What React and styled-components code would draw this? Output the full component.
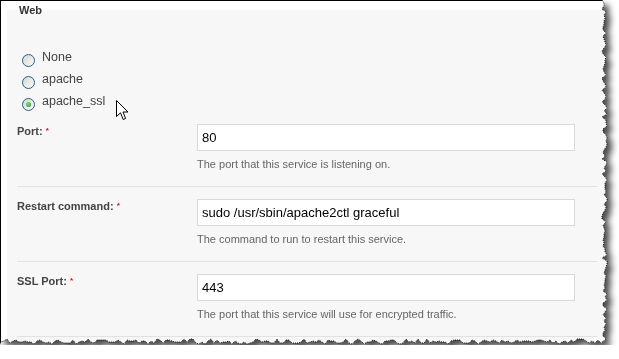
import React from "react";
import styled, { createGlobalStyle } from "styled-components";

const W = 608;
const H = 345;

// torn paper edge, same points every run
const seed = (() => {
	let s = 11;
	return () => {
		s = (s * 16807) % 2147483647;
		return s / 2147483647;
	};
})();

const edge = [];
for (let y = 0; y <= H - 5; y += 3) edge.push([W - 6 + Math.round(seed() * 5), y]);
for (let x = W - 7; x >= 0; x -= 3) edge.push([x, H - 6 + Math.round(seed() * 5)]);

const clip = `polygon(0 0, ${edge.map(([x, y]) => `${x}px ${y}px`).join(", ")}, 0 ${H}px)`;
const outline = edge.map(([x, y]) => `${x},${y}`).join(" ");

const fields = [
	{ label: "Port:", value: "80", help: "The port that this service is listening on." },
	{
		label: "Restart command:",
		value: "sudo /usr/sbin/apache2ctl graceful",
		help: "The command to run to restart this service.",
	},
	{ label: "SSL Port:", value: "443", help: "The port that this service will use for encrypted traffic." },
];

const servers = ["None", "apache", "apache_ssl"];

const App = () => {
	return (
		<>
			<GlobalStyle />
			<Shot>
				<Frame style={{ clipPath: clip }}>
					<Panel>
						<Legend>Web</Legend>
						<Radios>
							{servers.map((s) => (
								<RadioRow key={s}>
									<Radio type="radio" name="server" defaultChecked={s === "apache_ssl"} />
									{s}
								</RadioRow>
							))}
						</Radios>
						{fields.map((f) => (
							<Row key={f.label}>
								<Label>
									{f.label} <Req>*</Req>
								</Label>
								<Field>
									<Input defaultValue={f.value} />
									<Help>{f.help}</Help>
								</Field>
							</Row>
						))}
					</Panel>
				</Frame>
				<Edge width={W} height={H}>
					<polyline points={outline} fill="none" stroke="#111" strokeWidth="1" strokeDasharray="1 1" />
				</Edge>
				<Cursor width="13" height="21" viewBox="0 0 13 21">
					<path d="M0.5 0.5 L0.5 16.5 L4.5 12.8 L7.2 19.5 L9.6 18.5 L7 12 L12 12 Z" fill="#fff" stroke="#000" strokeWidth="1" />
				</Cursor>
			</Shot>
		</>
	);
};

const GlobalStyle = createGlobalStyle`
	body {
		margin: 0;
		background: #fff;
		font-family: "Liberation Sans", Arial, sans-serif;
	}
`;

const Shot = styled.div`
	position: relative;
	width: ${W}px;
	height: ${H}px;
	filter: drop-shadow(5px 5px 3px rgba(0, 0, 0, 0.7));
`;

const Frame = styled.div`
	box-sizing: border-box;
	width: ${W}px;
	height: ${H}px;
	background: #fff;
	border-top: 1px solid #000;
	border-left: 1px solid #000;
	padding: 9px 0 0 6px;
	overflow: hidden;
`;

const Panel = styled.div`
	display: flow-root;
	height: 100%;
	background: #f7f7f7;
	padding: 0 11px 0 10px;
`;

const Legend = styled.div`
	margin: -6px 0 0 2px;
	font-size: 11px;
	line-height: 13px;
	font-weight: bold;
	color: #333;
`;

const Radios = styled.div`
	margin: 29px 0 0 5px;
`;

const RadioRow = styled.label`
	display: flex;
	align-items: center;
	height: 22px;
	font-size: 12.5px;
	color: #444;
`;

const Radio = styled.input`
	appearance: none;
	box-sizing: border-box;
	width: 13px;
	height: 13px;
	margin: 7px 7px 0 0;
	border: 1px solid #2e5d8c;
	border-radius: 50%;
	background: linear-gradient(135deg, #d4d4cf, #fcfcfb);
	display: grid;
	place-items: center;
	&:checked::after {
		content: "";
		width: 5px;
		height: 5px;
		border-radius: 50%;
		background: radial-gradient(circle at 35% 35%, #7de07d, #1f9a1f);
	}
`;

const Row = styled.div`
	display: flex;
	padding: 12px 0 15px;
	border-bottom: 1px solid #e2e2e2;
	&:first-of-type {
		padding-top: 11px;
	}
`;

const Label = styled.div`
	width: 180px;
	flex: none;
	font-size: 11px;
	line-height: 14px;
	font-weight: bold;
	color: #444;
`;

const Req = styled.span`
	color: #e00;
	font-size: 8px;
	vertical-align: top;
`;

const Field = styled.div`
	display: flex;
	flex-direction: column;
	gap: 6px;
`;

const Input = styled.input`
	box-sizing: border-box;
	width: 378px;
	height: 27px;
	padding: 0 4px;
	border: 1px solid #d9d9d9;
	background: #fff;
	font-family: "Liberation Sans", Arial, sans-serif;
	font-size: 13px;
	color: #000;
	outline: none;
`;

const Help = styled.div`
	font-size: 11px;
	line-height: 14px;
	color: #666;
`;

const Edge = styled.svg`
	position: absolute;
	left: 0;
	top: 0;
	pointer-events: none;
`;

const Cursor = styled.svg`
	position: absolute;
	left: 116px;
	top: 100px;
`;

export default App;
